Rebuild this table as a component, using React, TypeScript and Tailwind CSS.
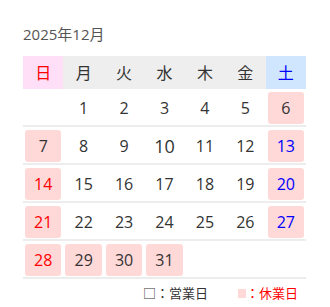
import React from "react";

const F = { fontFamily: '"Open Sans", "Noto Sans CJK JP", sans-serif' };

type Cell = { d: number | null; off?: boolean; c?: "red" | "blue"; big?: boolean };

const rows: Cell[][] = [
  [{ d: null }, { d: 1 }, { d: 2 }, { d: 3 }, { d: 4 }, { d: 5 }, { d: 6, off: true }],
  [{ d: 7, off: true }, { d: 8 }, { d: 9 }, { d: 10, big: true }, { d: 11 }, { d: 12 }, { d: 13, off: true, c: "blue" }],
  [{ d: 14, off: true, c: "red" }, { d: 15 }, { d: 16 }, { d: 17 }, { d: 18 }, { d: 19 }, { d: 20, off: true, c: "blue" }],
  [{ d: 21, off: true, c: "red" }, { d: 22 }, { d: 23 }, { d: 24 }, { d: 25 }, { d: 26 }, { d: 27, off: true, c: "blue" }],
  [{ d: 28, off: true, c: "red" }, { d: 29, off: true }, { d: 30, off: true }, { d: 31, off: true }, { d: null }, { d: null }, { d: null }],
];

export default function App() {
  return (
    <div className="w-[330px] h-[307px] bg-white pl-[23px] pt-[24px]" style={F}>
      <div className="text-[15px] leading-[20px] text-[#555555] mb-[12px]">2025年12月</div>
      <div className="w-[283px]">
        <div className="grid grid-cols-7 h-[33px] bg-[#eeeeee] text-[16px] text-[#333333]">
          <div className="flex items-center justify-center bg-[#ffdff7] text-[#ff0000]">日</div>
          <div className="flex items-center justify-center">月</div>
          <div className="flex items-center justify-center">火</div>
          <div className="flex items-center justify-center">水</div>
          <div className="flex items-center justify-center">木</div>
          <div className="flex items-center justify-center">金</div>
          <div className="flex items-center justify-center bg-[#d0e6ff] text-[#0000ff]">土</div>
        </div>
        {rows.map((r, i) => (
          <div key={i} className="grid grid-cols-7 pt-[3px] pb-px border-b-2 border-[#ededed]">
            {r.map((c, j) => (
              <div key={j} className="px-[2px]">
                <div
                  className={
                    "h-[32px] rounded-[3px] flex items-center justify-center " +
                    (c.off ? "bg-[#ffd8d8] " : "") +
                    (c.c === "red" ? "text-[#ff0000] " : c.c === "blue" ? "text-[#0000ff] " : "text-[#333333] ") +
                    (c.big ? "text-[18px]" : "text-[16px]")
                  }
                >
                  {c.d ?? ""}
                </div>
              </div>
            ))}
          </div>
        ))}
        <div className="flex justify-end items-center pr-[8px] mt-[5px] text-[13px] leading-[18px]">
          <span className="text-[#333333]">□：営業日</span>
          <span className="ml-[30px] inline-block w-[8px] h-[9px] bg-[#ffd8d8]"></span>
          <span className="text-[#ff0000]">：休業日</span>
        </div>
      </div>
    </div>
  );
}
